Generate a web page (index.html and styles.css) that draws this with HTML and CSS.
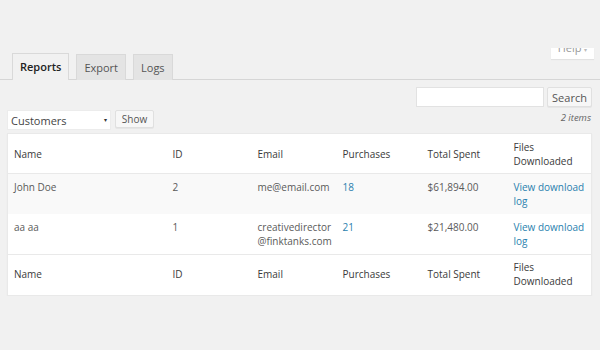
FILE: index.html
```html
<!DOCTYPE html>
<html lang="en">
<head>
    <meta charset="UTF-8">
    <title>Reports</title>
    <link rel="stylesheet" href="styles.css">
</head>
<body>
    <div class="page">
        <nav class="tabs">
            <a class="tab active">Reports</a>
            <a class="tab">Export</a>
            <a class="tab">Logs</a>
            <div class="help"><span>Help <small>&#9662;</small></span></div>
        </nav>

        <div class="search-row">
            <input class="search-input" type="text">
            <button class="btn search-btn">Search</button>
        </div>

        <div class="filter-row">
            <div class="filters">
                <div class="select">Customers <span class="arrow">&#9662;</span></div>
                <button class="btn show-btn">Show</button>
            </div>
            <span class="count">2 items</span>
        </div>

        <table class="report-table">
            <colgroup>
                <col class="c-name">
                <col class="c-id">
                <col class="c-email">
                <col class="c-purch">
                <col class="c-spent">
                <col class="c-files">
            </colgroup>
            <thead>
                <tr>
                    <th>Name</th>
                    <th>ID</th>
                    <th>Email</th>
                    <th>Purchases</th>
                    <th>Total Spent</th>
                    <th>Files Downloaded</th>
                </tr>
            </thead>
            <tbody>
                <tr class="alt">
                    <td>John Doe</td>
                    <td>2</td>
                    <td>me@email.com</td>
                    <td><a href="#">18</a></td>
                    <td>$61,894.00</td>
                    <td><a href="#">View download log</a></td>
                </tr>
                <tr>
                    <td>aa aa</td>
                    <td>1</td>
                    <td>creativedirector<br>@finktanks.com</td>
                    <td><a href="#">21</a></td>
                    <td>$21,480.00</td>
                    <td><a href="#">View download log</a></td>
                </tr>
            </tbody>
            <tfoot>
                <tr>
                    <th>Name</th>
                    <th>ID</th>
                    <th>Email</th>
                    <th>Purchases</th>
                    <th>Total Spent</th>
                    <th>Files Downloaded</th>
                </tr>
            </tfoot>
        </table>
    </div>
</body>
</html>
```

FILE: styles.css
```css
/* page */
body, html {
    margin: 0;
    padding: 0;
    background-color: #f1f1f1;
    font-family: 'Open Sans', sans-serif;
    color: #555;
}

.page {
    padding-top: 53px;
}

/* tabs */
.tabs {
    display: flex;
    align-items: flex-end;
    gap: 7px;
    padding-left: 12px;
    border-bottom: 1px solid #d6d6d6;
    height: 26px;
}

.tab {
    box-sizing: border-box;
    height: 26px;
    margin-bottom: -1px;
    padding: 0 7px;
    line-height: 25px;
    font-size: 11px;
    color: #555;
    background-color: #e4e4e4;
    border: 1px solid #d9d9d9;
    border-bottom: none;
}

.tab.active {
    background-color: #f1f1f1;
    color: #222;
    font-weight: 600;
    height: 27px;
}

.help {
    align-self: flex-start;
    margin-left: auto;
    margin-right: 6px;
    margin-top: -5px;
    width: 43px;
    height: 11px;
    overflow: hidden;
    background-color: #fff;
    box-shadow: 0 1px 1px rgba(0, 0, 0, 0.06);
    text-align: center;
}

.help span {
    display: block;
    margin-top: -7px;
    font-size: 11px;
    line-height: 14px;
    color: #999;
}

.help small {
    font-size: 6px;
    color: #bbb;
}

/* search */
.search-row {
    display: flex;
    justify-content: flex-end;
    gap: 3px;
    padding-right: 8px;
    margin-top: 7px;
}

.search-input {
    box-sizing: border-box;
    width: 128px;
    height: 20px;
    margin: 0;
    border: 1px solid #e2e2e2;
    background-color: #fff;
}

.btn {
    box-sizing: border-box;
    margin: 0;
    padding: 0 4px;
    font-family: 'Open Sans', sans-serif;
    color: #555;
    background-color: #f7f7f7;
    border: 1px solid #e0e0e0;
    border-radius: 2px;
    box-shadow: 0 1px 0 #e6e6e6;
}

.search-btn {
    width: 45px;
    height: 20px;
    font-size: 11px;
}

/* filters */
.filter-row {
    display: flex;
    justify-content: space-between;
    align-items: flex-start;
    padding: 0 9px 0 7px;
    margin-top: 3px;
}

.filters {
    display: flex;
    align-items: flex-start;
    gap: 4px;
}

.select {
    box-sizing: border-box;
    display: flex;
    justify-content: space-between;
    align-items: center;
    width: 104px;
    height: 20px;
    padding: 0 3px 0 3px;
    font-size: 11px;
    color: #444;
    background-color: #fff;
    border: 1px solid #ececec;
}

.arrow {
    font-size: 6px;
    color: #333;
}

.show-btn {
    width: 39px;
    height: 18px;
    font-size: 10px;
}

.count {
    margin-top: 1px;
    font-size: 9.5px;
    line-height: 14px;
    font-style: italic;
    color: #666;
}

/* table */
.report-table {
    box-sizing: border-box;
    width: 585px;
    margin: 3px 0 0 7px;
    table-layout: fixed;
    border-collapse: collapse;
    background-color: #fff;
    border: 1px solid #e9e9e9;
    box-shadow: 0 1px 1px rgba(0, 0, 0, 0.05);
    font-size: 10px;
    line-height: 14px;
}

.c-name { width: 159px; }
.c-id { width: 85px; }
.c-email { width: 85px; }
.c-purch { width: 85px; }
.c-spent { width: 86px; }
.c-files { width: 84px; }

.report-table th,
.report-table td {
    padding: 6px 6px;
    text-align: left;
    vertical-align: top;
}

.report-table th {
    font-weight: 400;
    color: #3a3a3a;
    vertical-align: middle;
}

.report-table thead th {
    padding: 6px 6px 5px;
    border-bottom: 1px solid #e9e9e9;
}

.report-table tfoot th {
    padding: 5px 6px 7px;
    border-top: 1px solid #e9e9e9;
}

.report-table td {
    color: #5a5a5a;
    height: 27px;
}

.report-table tr.alt td {
    background-color: #f9f9f9;
}

.report-table a {
    color: #2a7fae;
    text-decoration: none;
}
```
